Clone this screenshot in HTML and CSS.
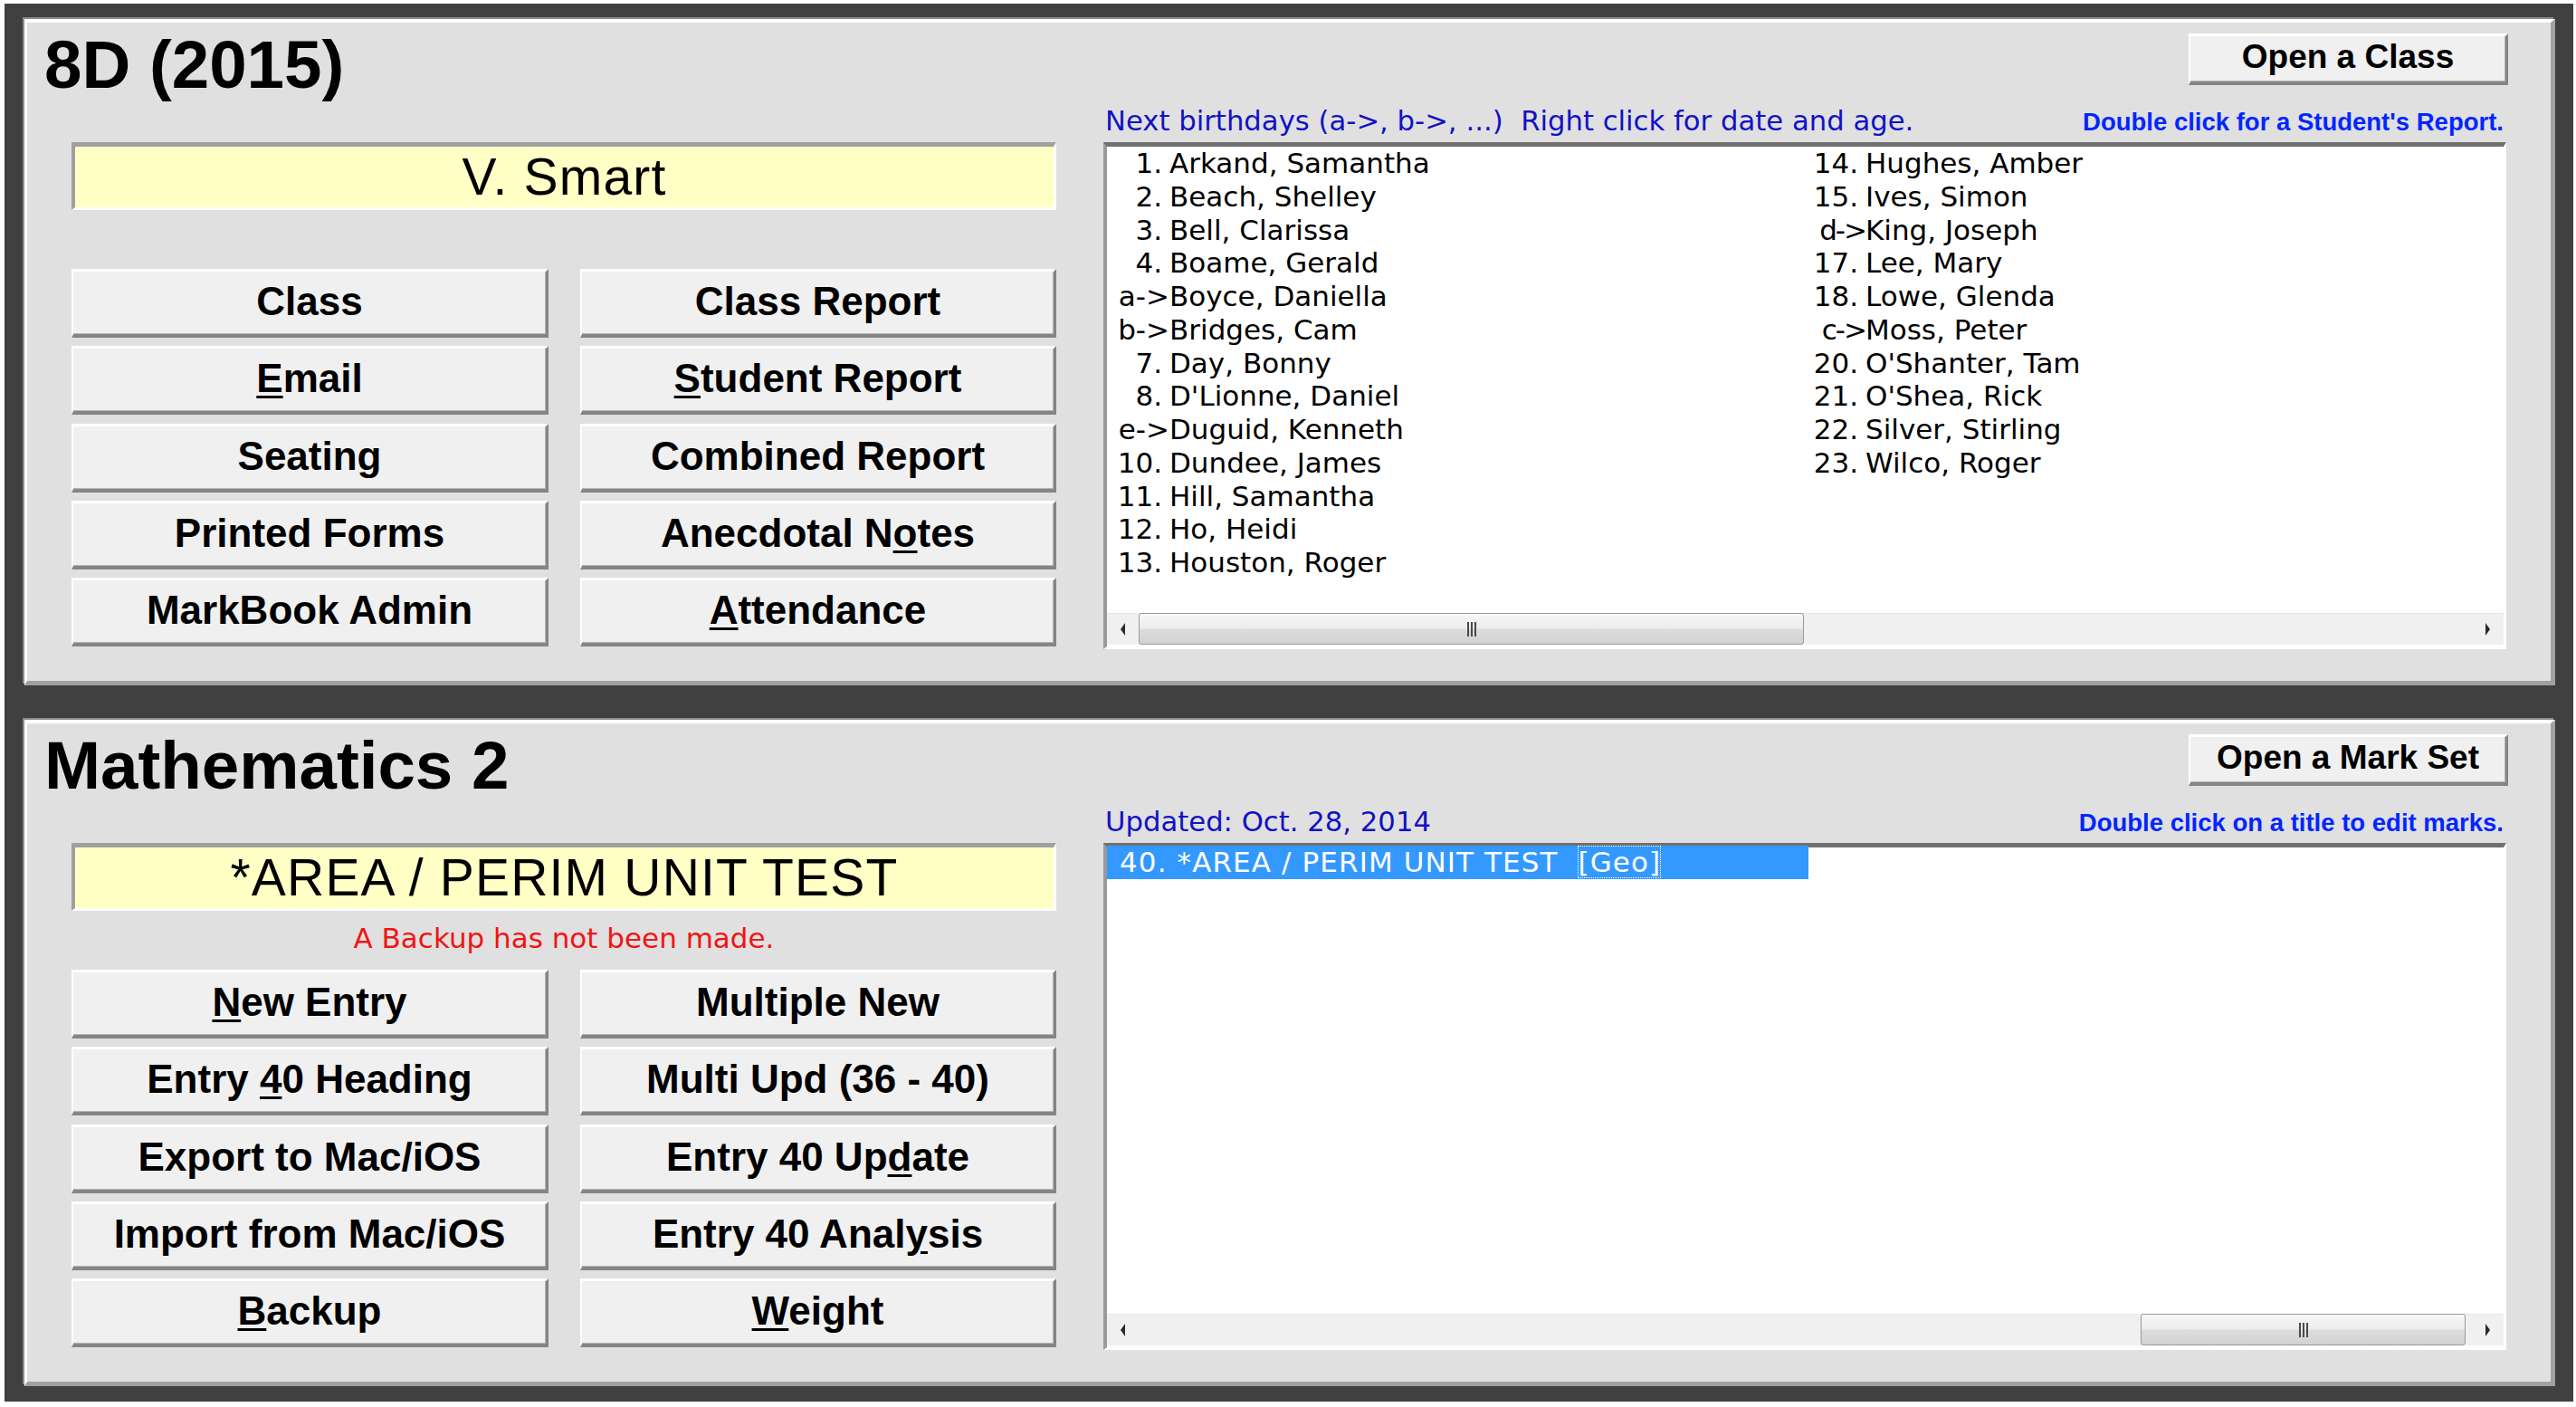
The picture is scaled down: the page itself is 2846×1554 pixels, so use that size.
FILE: index.html
```html
<!DOCTYPE html>
<html>
<head>
<meta charset="utf-8">
<title>MarkBook</title>
<link rel="stylesheet" href="styles.css">
</head>
<body>
<div class="frame">
  <section class="panel">
    <div class="left">
      <h1 class="title">8D (2015)</h1>
      <div class="namebox">V. Smart</div>
      <div class="msg"></div>
      <div class="btns">
        <div class="btn"><span>Class</span></div>
        <div class="btn"><span>Class Report</span></div>
        <div class="btn"><span><u>E</u>mail</span></div>
        <div class="btn"><span><u>S</u>tudent Report</span></div>
        <div class="btn"><span>Seating</span></div>
        <div class="btn"><span>Combined Report</span></div>
        <div class="btn"><span>Printed Forms</span></div>
        <div class="btn"><span>Anecdotal N<u>o</u>tes</span></div>
        <div class="btn"><span>MarkBook Admin</span></div>
        <div class="btn"><span><u>A</u>ttendance</span></div>
      </div>
    </div>
    <div class="right">
      <div class="topbar"><div class="btn small"><span>Open a Class</span></div></div>
      <div class="labels">
        <span class="hint">Next birthdays (a-&gt;, b-&gt;, ...)  Right click for date and age.</span>
        <span class="hint2">Double click for a Student's Report.</span>
      </div>
      <div class="listbox">
        <div class="items">
          <div class="item"><span class="n">1.</span><span>Arkand, Samantha</span></div>
          <div class="item"><span class="n">2.</span><span>Beach, Shelley</span></div>
          <div class="item"><span class="n">3.</span><span>Bell, Clarissa</span></div>
          <div class="item"><span class="n">4.</span><span>Boame, Gerald</span></div>
          <div class="item"><span class="n a">a-&gt;</span><span>Boyce, Daniella</span></div>
          <div class="item"><span class="n a">b-&gt;</span><span>Bridges, Cam</span></div>
          <div class="item"><span class="n">7.</span><span>Day, Bonny</span></div>
          <div class="item"><span class="n">8.</span><span>D'Lionne, Daniel</span></div>
          <div class="item"><span class="n a">e-&gt;</span><span>Duguid, Kenneth</span></div>
          <div class="item"><span class="n">10.</span><span>Dundee, James</span></div>
          <div class="item"><span class="n">11.</span><span>Hill, Samantha</span></div>
          <div class="item"><span class="n">12.</span><span>Ho, Heidi</span></div>
          <div class="item"><span class="n">13.</span><span>Houston, Roger</span></div>
          <div class="item"><span class="n">14.</span><span>Hughes, Amber</span></div>
          <div class="item"><span class="n">15.</span><span>Ives, Simon</span></div>
          <div class="item"><span class="n a2">d-&gt;</span><span>King, Joseph</span></div>
          <div class="item"><span class="n">17.</span><span>Lee, Mary</span></div>
          <div class="item"><span class="n">18.</span><span>Lowe, Glenda</span></div>
          <div class="item"><span class="n a2">c-&gt;</span><span>Moss, Peter</span></div>
          <div class="item"><span class="n">20.</span><span>O'Shanter, Tam</span></div>
          <div class="item"><span class="n">21.</span><span>O'Shea, Rick</span></div>
          <div class="item"><span class="n">22.</span><span>Silver, Stirling</span></div>
          <div class="item"><span class="n">23.</span><span>Wilco, Roger</span></div>
        </div>
        <div class="hscroll">
          <span class="arr"><span class="tri l"></span></span>
          <div class="track"><div class="thumb" style="margin-left:0px;width:735px"><span class="grip"></span></div></div>
          <span class="arr"><span class="tri r"></span></span>
        </div>
      </div>
    </div>
  </section>

  <section class="panel">
    <div class="left">
      <h1 class="title">Mathematics 2</h1>
      <div class="namebox">*AREA / PERIM UNIT TEST</div>
      <div class="msg">A Backup has not been made.</div>
      <div class="btns">
        <div class="btn"><span><u>N</u>ew Entry</span></div>
        <div class="btn"><span>Multiple New</span></div>
        <div class="btn"><span>Entry <u>4</u>0 Heading</span></div>
        <div class="btn"><span>Multi Upd (36 - 40)</span></div>
        <div class="btn"><span>Export to Mac/iOS</span></div>
        <div class="btn"><span>Entry 40 Up<u>d</u>ate</span></div>
        <div class="btn"><span>Import from Mac/iOS</span></div>
        <div class="btn"><span>Entry 40 Anal<u>y</u>sis</span></div>
        <div class="btn"><span><u>B</u>ackup</span></div>
        <div class="btn"><span><u>W</u>eight</span></div>
      </div>
    </div>
    <div class="right">
      <div class="topbar"><div class="btn small"><span>Open a Mark Set</span></div></div>
      <div class="labels">
        <span class="hint">Updated: Oct. 28, 2014</span>
        <span class="hint2">Double click on a title to edit marks.</span>
      </div>
      <div class="listbox">
        <div class="marks">
          <div class="sel">40. *AREA / PERIM UNIT TEST  <span class="focus">[Geo]</span></div>
        </div>
        <div class="hscroll">
          <span class="arr"><span class="tri l"></span></span>
          <div class="track"><div class="thumb" style="margin-left:1107px;width:359px"><span class="grip"></span></div></div>
          <span class="arr"><span class="tri r"></span></span>
        </div>
      </div>
    </div>
  </section>
</div>
</body>
</html>
```

FILE: styles.css
```css
html, body {
  margin: 0;
  padding: 0;
}
body {
  background: #ffffff;
  width: 2846px;
  height: 1554px;
  overflow: hidden;
}
.frame {
  margin: 4px 3px 0 5px;
  background: #404040;
  padding: 17px 20px 17px 22px;
  display: flex;
  flex-direction: column;
  gap: 38px;
}
.panel {
  box-sizing: border-box;
  background: #e0e0e0;
  border-style: solid;
  border-width: 4px 5px 5px 3px;
  border-color: #ffffff #a0a0a0 #a0a0a0 #ffffff;
  box-shadow: -2px -2px 0 #8c8c8c;
  padding: 7px 47px 35px 19px;
  display: flex;
  gap: 52px;
}
.left {
  width: 1118px;
  flex: none;
}
.title {
  margin: 0;
  font: bold 74.5px/80px "Liberation Sans", Arial, sans-serif;
  color: #000;
  white-space: nowrap;
}
.namebox {
  margin: 45px 0 0 30px;
  height: 75px;
  box-sizing: border-box;
  border-style: solid;
  border-width: 5px 3px 3px 4px;
  border-color: #a0a0a0 #ffffff #ffffff #a0a0a0;
  background: #ffffc6;
  display: flex;
  align-items: center;
  justify-content: center;
  padding-bottom: 2px;
  font: 57px "Liberation Sans", Arial, sans-serif;
  letter-spacing: 1.2px;
  color: #000;
  white-space: nowrap;
}
.msg {
  margin-left: 30px;
  height: 65px;
  box-sizing: border-box;
  padding-top: 12px;
  text-align: center;
  font: 31px/36px "DejaVu Sans", sans-serif;
  color: #f01414;
}
.btns {
  margin-left: 30px;
  display: grid;
  grid-template-columns: 527px 526px;
  grid-auto-rows: 76px;
  column-gap: 35px;
  row-gap: 9.25px;
}
.btn {
  box-sizing: border-box;
  background: #f0f0f0;
  border-style: solid;
  border-width: 3px 3px 4px 2px;
  border-color: #ffffff #858585 #858585 #ffffff;
  box-shadow: inset -1px -1px 0 #b4b4b4;
  display: flex;
  align-items: center;
  justify-content: center;
  padding-bottom: 3px;
  font: bold 44px "Liberation Sans", Arial, sans-serif;
  color: #000;
  white-space: pre;
}
.btn u {
  text-decoration-thickness: 3px;
  text-underline-offset: 4px;
}
.right {
  flex: 1;
  display: flex;
  flex-direction: column;
}
.topbar {
  display: flex;
  justify-content: flex-end;
  padding-top: 5px;
}
.btn.small {
  width: 353px;
  height: 57px;
  font-size: 37px;
  padding-bottom: 4px;
}
.labels {
  margin-top: 22px;
  height: 36px;
  margin-bottom: 5px;
  display: flex;
  justify-content: space-between;
  align-items: baseline;
  padding: 0 5px 0 2px;
  white-space: pre;
}
.hint {
  font: 30.7px/36px "DejaVu Sans", sans-serif;
  color: #1212c4;
}
.hint2 {
  font: bold 27.5px/36px "Liberation Sans", Arial, sans-serif;
  color: #0026ff;
}
.listbox {
  margin-right: 2px;
  height: 560px;
  box-sizing: border-box;
  border-style: solid;
  border-width: 5px 3px 3px 4px;
  border-color: #707070 #ffffff #ffffff #9a9a9a;
  background: #ffffff;
  display: flex;
  flex-direction: column;
}
.items {
  flex: 1;
  display: grid;
  grid-auto-flow: column;
  grid-template-rows: repeat(13, 36.75px);
  grid-template-columns: 769px 769px;
  align-content: start;
  font: 31px/36.75px "DejaVu Sans", sans-serif;
  color: #000;
}
.item {
  display: flex;
  white-space: pre;
}
.n {
  flex: none;
  width: 61px;
  padding-right: 8px;
  text-align: right;
}
.n.a {
  width: 69px;
  padding-right: 0;
}
.n.a2 {
  width: 69px;
  padding-right: 0;
  letter-spacing: -2px;
}
.marks {
  flex: 1;
}
.sel {
  width: 761px;
  height: 37px;
  margin-top: -2px;
  padding-left: 14px;
  background: #3399ff;
  color: #ffffff;
  font: 31px/37px "DejaVu Sans", sans-serif;
  letter-spacing: 1.1px;
  white-space: pre;
}
.focus {
  outline: 1px dotted #ffffff;
  outline-offset: -1px;
}
.hscroll {
  flex: none;
  height: 35px;
  margin-bottom: 2px;
  display: flex;
  background: #f0f0f0;
  box-shadow: inset 0 1px 0 #e6e6e6;
}
.arr {
  flex: none;
  width: 35px;
  display: flex;
  align-items: center;
  justify-content: center;
}
.tri {
  width: 0;
  height: 0;
  border-top: 7px solid transparent;
  border-bottom: 7px solid transparent;
}
.tri.l {
  border-right: 5px solid #2a2a2a;
}
.tri.r {
  border-left: 5px solid #2a2a2a;
}
.track {
  flex: 1;
  display: flex;
}
.thumb {
  box-sizing: border-box;
  height: 35px;
  border: 1px solid #9a9a9a;
  border-radius: 3px;
  background: linear-gradient(#f7f7f7 0%, #ececec 48%, #dcdcdc 52%, #d2d2d2 100%);
  display: flex;
  align-items: center;
  justify-content: center;
}
.grip {
  width: 10px;
  height: 16px;
  background: repeating-linear-gradient(90deg, #4a4a4a 0 2px, transparent 2px 4px);
}
```
